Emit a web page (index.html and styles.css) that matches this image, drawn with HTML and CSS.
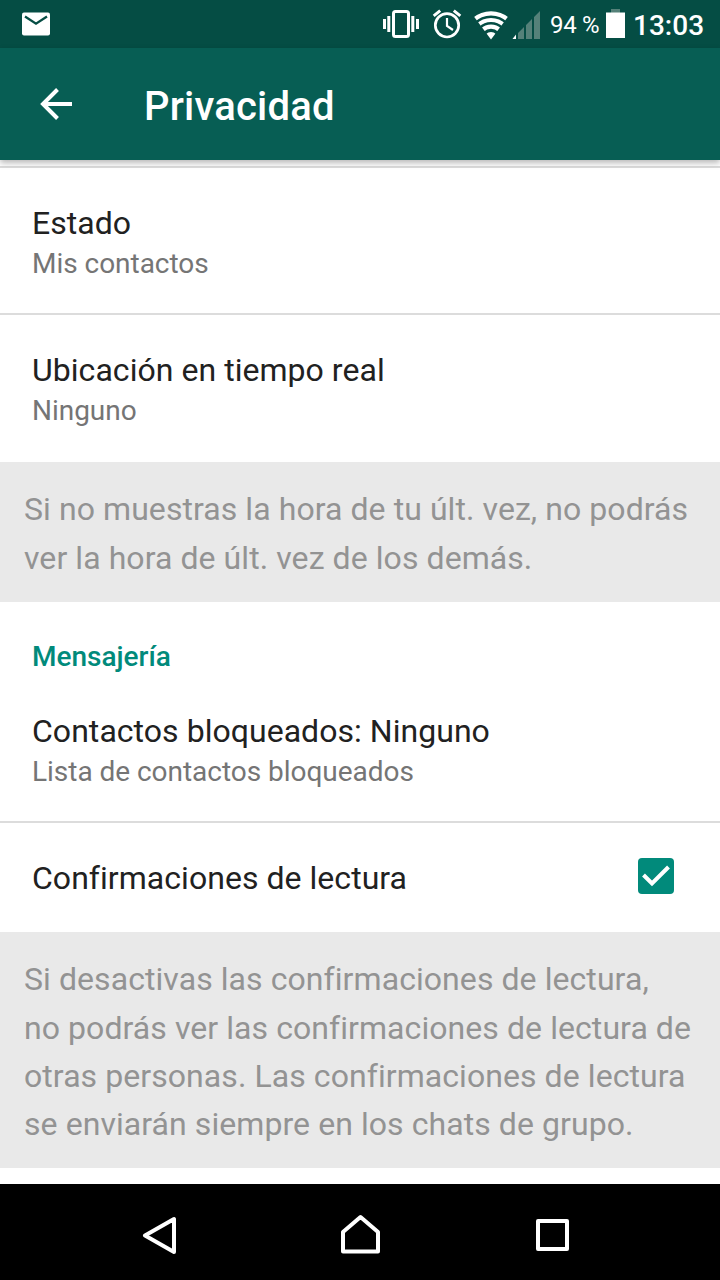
FILE: index.html
```html
<!DOCTYPE html>
<html lang="es">
<head>
<meta charset="utf-8">
<title>Privacidad</title>
<link rel="stylesheet" href="styles.css">
</head>
<body>
<div class="screen">
  <div class="status">
    <svg class="mail" width="28" height="24" viewBox="0 0 28 24"><rect y=".5" width="28" height="23" rx="2" fill="#fff"/><path d="M3 4.500L14 11.700L25 4.500" fill="none" stroke="#054d44" stroke-width="2.300"/></svg>
    <svg class="signals" width="160" height="48" viewBox="0 0 160 48">
      <g fill="#fff">
        <path d="M3 19h3v10H3zM7.300 16h3v16h-3zM31.300 16h3v16h-3zM36 19h3v10h-3z"/>
        <rect x="13.500" y="11.500" width="15" height="25" rx="2" fill="none" stroke="#fff" stroke-width="3"/>
      </g>
      <g fill="none" stroke="#fff">
        <circle cx="67" cy="25.300" r="11.700" stroke-width="2.700"/>
        <path d="M67 18v8l6 4" stroke-width="2.200"/>
        <path d="M53.700 15.800l6.500-5.200M73.800 10.600l6.500 5.200" stroke-width="3"/>
      </g>
      <clipPath id="fan"><path d="M111 39.500L93.500 16V8H128.500V16Z"/></clipPath>
      <g clip-path="url(#fan)" fill="none" stroke="#fff" stroke-width="4.200">
        <circle cx="111" cy="39" r="25.700"/><circle cx="111" cy="39" r="19"/><circle cx="111" cy="39" r="12.300"/>
        <circle cx="111" cy="39" r="7" fill="#fff" stroke="none"/>
      </g>
      <path d="M138 39V33l6-6V39zM146 39V25l6-6V39zM154 39V17l6-6V39z" fill="#558179"/>
      <path d="M132.500 39l3.500-4.500V39z" fill="#fff"/>
    </svg>
    <span class="percent">94 %</span>
    <svg class="battery" width="19" height="29" viewBox="0 0 19 29"><path d="M5 0h9v4H5z" fill="#558179"/><path d="M0 3.500h19V29H0z" fill="#fff"/></svg>
    <span class="clock">13:03</span>
  </div>
  <header class="toolbar">
    <svg class="back" width="32" height="32" viewBox="0 0 32 32"><path d="M32 16H3M17.500 1.500L3 16L17.500 30.500" fill="none" stroke="#fff" stroke-width="4"/></svg>
    <h1>Privacidad</h1>
  </header>
  <main>
    <section class="row ruled"><div class="title">Estado</div><div class="sub">Mis contactos</div></section>
    <section class="row ruled"><div class="title">Ubicación en tiempo real</div><div class="sub">Ninguno</div></section>
    <p class="info short">Si no muestras la hora de tu últ. vez, no podrás<br>ver la hora de últ. vez de los demás.</p>
    <h2>Mensajería</h2>
    <section class="row blocked"><div class="title">Contactos bloqueados: Ninguno</div><div class="sub">Lista de contactos bloqueados</div></section>
    <section class="check ruled">
      <div class="title">Confirmaciones de lectura</div>
      <svg width="36" height="36" viewBox="0 0 36 36"><rect width="36" height="36" rx="4" fill="#018a7b"/><path d="M5.500 17L14 25.500L30.500 9" fill="none" stroke="#fff" stroke-width="4"/></svg>
    </section>
    <p class="info long">Si desactivas las confirmaciones de lectura,<br>no podrás ver las confirmaciones de lectura de<br>otras personas. Las confirmaciones de lectura<br>se enviarán siempre en los chats de grupo.</p>
  </main>
  <nav class="navbar">
    <svg width="720" height="96" viewBox="0 0 720 96" fill="none" stroke="#fff" stroke-width="4" stroke-linejoin="round"><path d="M145 51.500L174 35V68zM343 67.500V48L360.500 33L378 48V67.500zM538 37H567V65H538z"/></svg>
  </nav>
</div>
</body>
</html>
```
FILE: styles.css
```css
* { box-sizing: border-box; }
body { margin: 0; font-family: Roboto, "Liberation Sans", sans-serif; }
svg { display: block; flex: none; }
.screen { width: 720px; height: 1280px; display: flex; flex-direction: column; background: #fff; overflow: hidden; }
.status { height: 48px; flex: none; display: flex; background: #054d44; color: #fff; white-space: nowrap; padding-left: 22px; }
.mail { margin-top: 12px; }
.signals { margin-left: 330px; }
.percent { width: 57px; margin-left: 10px; font-size: 24px; line-height: 51px; letter-spacing: -.3px; }
.battery { margin: 9px 0 0 -1px; }
.clock { margin-left: 8px; font-size: 28px; font-weight: 500; line-height: 52px; }
.toolbar { height: 112px; flex: none; display: flex; align-items: center; padding-left: 40px; background: #075e54; color: #fff; box-shadow: 0 3px 6px rgba(0, 0, 0, .28); z-index: 1; }
h1 { margin: 5px 0 0 72px; font-size: 40px; line-height: 48px; font-weight: 500; letter-spacing: .2px; }
main { flex: 1; padding-top: 6px; }
.row { height: 147px; padding: 37px 32px 0; }
.ruled { border-top: 2px solid #dcdcdc; }
.ruled.row { padding-top: 35px; }
.title { font-size: 32px; line-height: 40px; color: #212121; letter-spacing: .04px; }
.sub { margin-top: 1px; font-size: 28px; line-height: 40px; color: #757575; letter-spacing: -.03px; }
.info { margin: 0; padding: 23.200px 24px 0; background: #e9e9e9; color: #939393; font-size: 32px; line-height: 48.400px; letter-spacing: .07px; white-space: nowrap; }
.info.short { height: 140px; margin-top: 2px; }
.info.long { height: 236px; }
h2 { height: 74px; margin: 0; padding: 36px 32px 0; font-size: 28px; line-height: 38px; font-weight: 500; color: #018a7b; }
.row.blocked { height: 145px; padding-top: 35px; }
.check { height: 111px; display: flex; justify-content: space-between; padding: 35px 46px 0 32px; }
.navbar { height: 96px; flex: none; background: #000; }
```
